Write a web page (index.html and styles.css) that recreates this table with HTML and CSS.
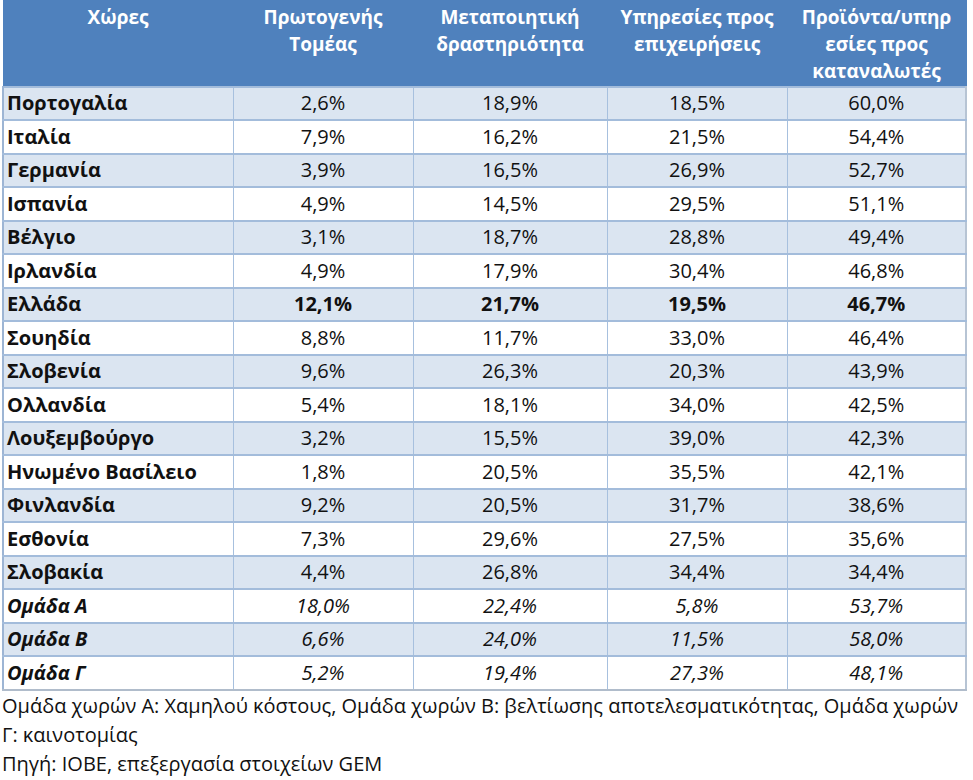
FILE: index.html
```html
<!DOCTYPE html>
<html lang="el">
<head>
<meta charset="utf-8">
<link rel="stylesheet" href="styles.css">
</head>
<body>
<table class="gem">
  <colgroup>
    <col class="c1"><col class="c2"><col class="c3"><col class="c4"><col class="c5">
  </colgroup>
  <thead>
    <tr>
      <th>Χώρες</th>
      <th>Πρωτογενής<br>Τομέας</th>
      <th>Μεταποιητική<br>δραστηριότητα</th>
      <th>Υπηρεσίες προς<br>επιχειρήσεις</th>
      <th>Προϊόντα/υπηρ<br>εσίες προς<br>καταναλωτές</th>
    </tr>
  </thead>
  <tbody>
    <tr><td>Πορτογαλία</td><td>2,6%</td><td>18,9%</td><td>18,5%</td><td>60,0%</td></tr>
    <tr><td>Ιταλία</td><td>7,9%</td><td>16,2%</td><td>21,5%</td><td>54,4%</td></tr>
    <tr><td>Γερμανία</td><td>3,9%</td><td>16,5%</td><td>26,9%</td><td>52,7%</td></tr>
    <tr><td>Ισπανία</td><td>4,9%</td><td>14,5%</td><td>29,5%</td><td>51,1%</td></tr>
    <tr><td>Βέλγιο</td><td>3,1%</td><td>18,7%</td><td>28,8%</td><td>49,4%</td></tr>
    <tr><td>Ιρλανδία</td><td>4,9%</td><td>17,9%</td><td>30,4%</td><td>46,8%</td></tr>
    <tr class="hl"><td>Ελλάδα</td><td>12,1%</td><td>21,7%</td><td>19,5%</td><td>46,7%</td></tr>
    <tr><td>Σουηδία</td><td>8,8%</td><td>11,7%</td><td>33,0%</td><td>46,4%</td></tr>
    <tr><td>Σλοβενία</td><td>9,6%</td><td>26,3%</td><td>20,3%</td><td>43,9%</td></tr>
    <tr><td>Ολλανδία</td><td>5,4%</td><td>18,1%</td><td>34,0%</td><td>42,5%</td></tr>
    <tr><td>Λουξεμβούργο</td><td>3,2%</td><td>15,5%</td><td>39,0%</td><td>42,3%</td></tr>
    <tr><td>Ηνωμένο Βασίλειο</td><td>1,8%</td><td>20,5%</td><td>35,5%</td><td>42,1%</td></tr>
    <tr><td>Φινλανδία</td><td>9,2%</td><td>20,5%</td><td>31,7%</td><td>38,6%</td></tr>
    <tr><td>Εσθονία</td><td>7,3%</td><td>29,6%</td><td>27,5%</td><td>35,6%</td></tr>
    <tr class="last"><td>Σλοβακία</td><td>4,4%</td><td>26,8%</td><td>34,4%</td><td>34,4%</td></tr>
    <tr class="grp"><td>Ομάδα Α</td><td>18,0%</td><td>22,4%</td><td>5,8%</td><td>53,7%</td></tr>
    <tr class="grp"><td>Ομάδα Β</td><td>6,6%</td><td>24,0%</td><td>11,5%</td><td>58,0%</td></tr>
    <tr class="grp"><td>Ομάδα Γ</td><td>5,2%</td><td>19,4%</td><td>27,3%</td><td>48,1%</td></tr>
  </tbody>
</table>
<p class="note">Ομάδα χωρών Α: Χαμηλού κόστους, Ομάδα χωρών Β: βελτίωσης αποτελεσματικότητας, Ομάδα χωρών<br>Γ: καινοτομίας</p>
<p class="note">Πηγή: ΙΟΒΕ, επεξεργασία στοιχείων GEM</p>
</body>
</html>
```
FILE: styles.css
```css
html, body {
  margin: 0;
  padding: 0;
  background: #ffffff;
}
body {
  padding: 0 0 0 2px;
  font-family: "Open Sans", "Noto Sans", sans-serif;
  color: #111111;
}
.gem {
  border-collapse: collapse;
  table-layout: fixed;
  width: 963px;
  font-size: 20px;
}
.c1 { width: 230px; }
.c2 { width: 180px; }
.c3 { width: 194px; }
.c4 { width: 180px; }
.c5 { width: 179px; }
.gem th {
  background: #4f81bd;
  color: #ffffff;
  font-weight: 700;
  font-size: 19px;
  line-height: 27px;
  height: 86px;
  padding: 3px 2px 0;
  vertical-align: top;
  text-align: center;
  border: 1px solid #4f81bd;
  box-sizing: border-box;
}
.gem td {
  height: 33.5px;
  padding: 0 4px;
  text-align: center;
  border-top: 2px solid #a3bcdb;
  border-bottom: 2px solid #a3bcdb;
  border-left: 1px solid #a7c0de;
  border-right: 1px solid #a7c0de;
  box-sizing: border-box;
  line-height: 28px;
}
.gem td:first-child {
  text-align: left;
  font-weight: 700;
  padding-left: 3px;
  border-left: 2px solid #9db5d4;
}
.gem td:last-child {
  border-right: 2px solid #b7c4d4;
}
.gem tbody tr:nth-child(odd) td {
  background: #dbe5f1;
}
.gem tbody tr:nth-child(even) td {
  background: #ffffff;
}
.gem tr.hl td {
  font-weight: 700;
}
.gem tr.last td {
  border-bottom: 2px dashed #9fb8d8;
}
.gem tr.grp td {
  font-style: italic;
}
.gem tr.grp:last-child td {
  border-bottom: 2px solid #b0bccb;
}
.note {
  margin: 0;
  font-size: 20px;
  line-height: 29px;
  color: #111111;
}
```
